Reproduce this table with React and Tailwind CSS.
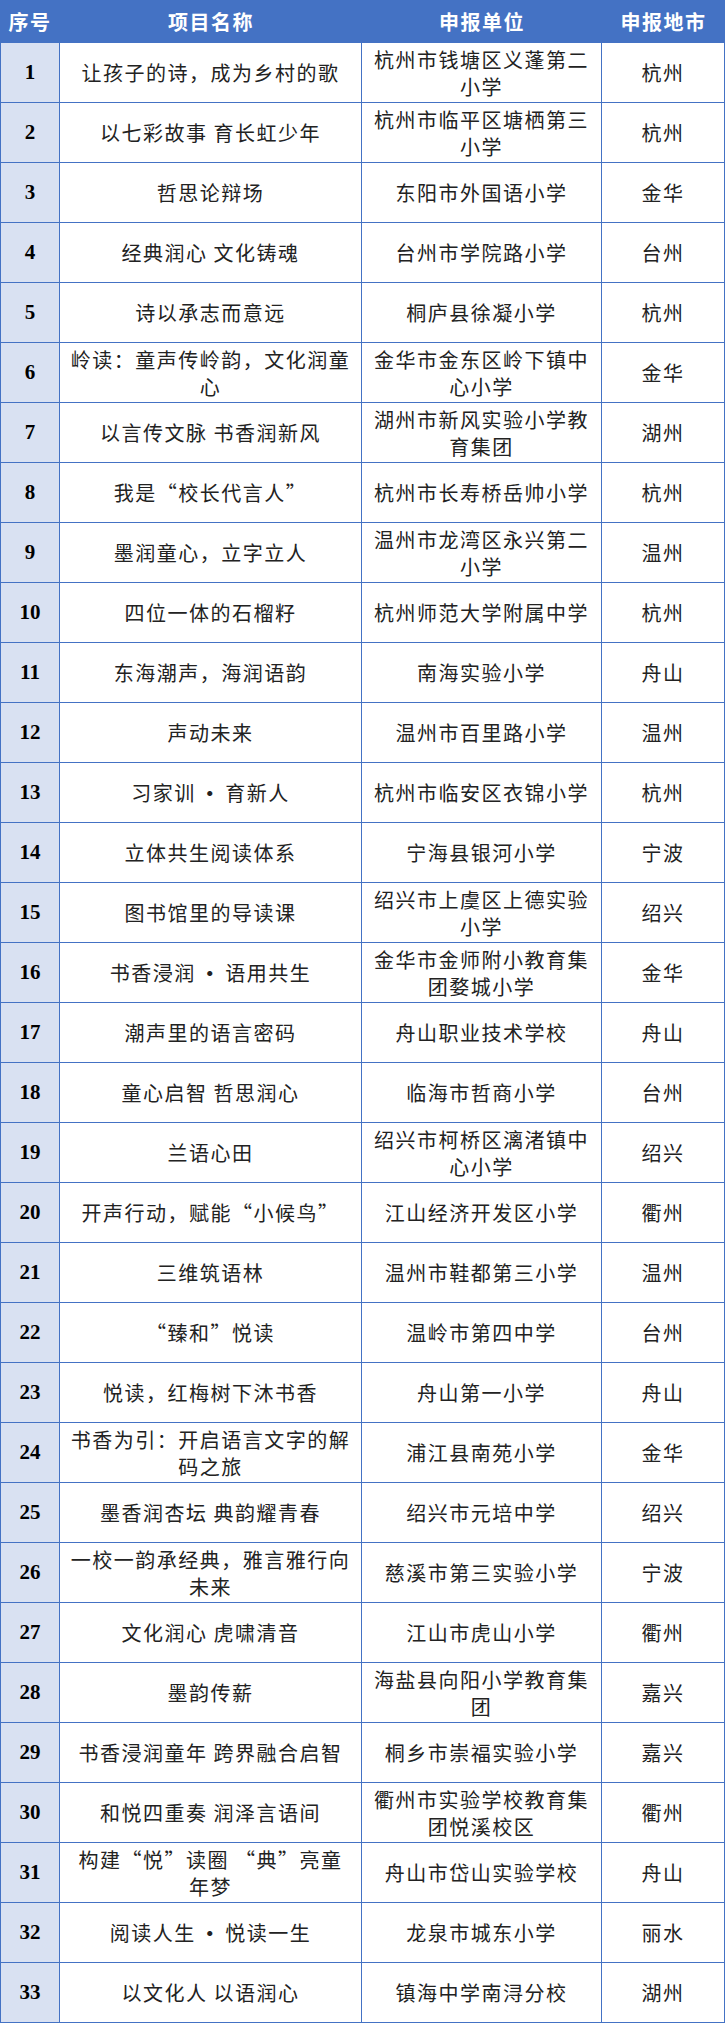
const ROWS = [
  [['让孩子的诗，成为乡村的歌'], ['杭州市钱塘区义蓬第二', '小学'], '杭州'],
  [['以七彩故事 育长虹少年'], ['杭州市临平区塘栖第三', '小学'], '杭州'],
  [['哲思论辩场'], ['东阳市外国语小学'], '金华'],
  [['经典润心 文化铸魂'], ['台州市学院路小学'], '台州'],
  [['诗以承志而意远'], ['桐庐县徐凝小学'], '杭州'],
  [['岭读：童声传岭韵，文化润童', '心'], ['金华市金东区岭下镇中', '心小学'], '金华'],
  [['以言传文脉 书香润新风'], ['湖州市新风实验小学教', '育集团'], '湖州'],
  [['我是“校长代言人”'], ['杭州市长寿桥岳帅小学'], '杭州'],
  [['墨润童心，立字立人'], ['温州市龙湾区永兴第二', '小学'], '温州'],
  [['四位一体的石榴籽'], ['杭州师范大学附属中学'], '杭州'],
  [['东海潮声，海润语韵'], ['南海实验小学'], '舟山'],
  [['声动未来'], ['温州市百里路小学'], '温州'],
  [['习家训•育新人'], ['杭州市临安区衣锦小学'], '杭州'],
  [['立体共生阅读体系'], ['宁海县银河小学'], '宁波'],
  [['图书馆里的导读课'], ['绍兴市上虞区上德实验', '小学'], '绍兴'],
  [['书香浸润•语用共生'], ['金华市金师附小教育集', '团婺城小学'], '金华'],
  [['潮声里的语言密码'], ['舟山职业技术学校'], '舟山'],
  [['童心启智 哲思润心'], ['临海市哲商小学'], '台州'],
  [['兰语心田'], ['绍兴市柯桥区漓渚镇中', '心小学'], '绍兴'],
  [['开声行动，赋能“小候鸟”'], ['江山经济开发区小学'], '衢州'],
  [['三维筑语林'], ['温州市鞋都第三小学'], '温州'],
  [['“臻和”悦读'], ['温岭市第四中学'], '台州'],
  [['悦读，红梅树下沐书香'], ['舟山第一小学'], '舟山'],
  [['书香为引：开启语言文字的解', '码之旅'], ['浦江县南苑小学'], '金华'],
  [['墨香润杏坛 典韵耀青春'], ['绍兴市元培中学'], '绍兴'],
  [['一校一韵承经典，雅言雅行向', '未来'], ['慈溪市第三实验小学'], '宁波'],
  [['文化润心 虎啸清音'], ['江山市虎山小学'], '衢州'],
  [['墨韵传薪'], ['海盐县向阳小学教育集', '团'], '嘉兴'],
  [['书香浸润童年 跨界融合启智'], ['桐乡市崇福实验小学'], '嘉兴'],
  [['和悦四重奏 润泽言语间'], ['衢州市实验学校教育集', '团悦溪校区'], '衢州'],
  [['构建“悦”读圈 “典”亮童', '年梦'], ['舟山市岱山实验学校'], '舟山'],
  [['阅读人生•悦读一生'], ['龙泉市城东小学'], '丽水'],
  [['以文化人 以语润心'], ['镇海中学南浔分校'], '湖州'],
]

const cjk = { fontFamily: '"Noto Sans CJK SC", sans-serif' }

// the bullet gets a little air on both sides, like the source sheet
function Line({ text }) {
  const parts = text.split('•')
  return (
    <div className="whitespace-pre">
      {parts.map((p, i) => (
        <span key={i}>
          {i > 0 && <span className="mx-[4px] font-bold">•</span>}
          {p}
        </span>
      ))}
    </div>
  )
}

function Lines({ lines }) {
  return (
    <div className="text-center leading-[27px]">
      {lines.map((l, i) => (
        <Line key={i} text={l} />
      ))}
    </div>
  )
}

export default function App() {
  return (
    <div className="w-[725px] bg-white text-[20px] text-[#222] tracking-[1.5px]" style={cjk}>
      <div className="grid grid-cols-[60px_302px_240px_123px] h-[43px] bg-[#4472C4] text-white font-bold">
        <div className="flex items-center justify-center">序号</div>
        <div className="flex items-center justify-center">项目名称</div>
        <div className="flex items-center justify-center">申报单位</div>
        <div className="flex items-center justify-center">申报地市</div>
      </div>
      {ROWS.map(([name, unit, city], i) => (
        <div key={i} className="grid grid-cols-[60px_302px_240px_123px] h-[60px] border-b border-[#4472C4]">
          <div
            className="flex items-center justify-center bg-[#D9E1F2] border-l border-r border-[#4472C4] font-bold text-[21px] tracking-normal text-black"
            style={{ fontFamily: '"Liberation Serif", serif' }}
          >
            {i + 1}
          </div>
          <div className="flex items-center justify-center border-r border-[#4472C4]">
            <Lines lines={name} />
          </div>
          <div className="flex items-center justify-center border-r border-[#4472C4]">
            <Lines lines={unit} />
          </div>
          <div className="flex items-center justify-center border-r border-[#4472C4]">{city}</div>
        </div>
      ))}
    </div>
  )
}
